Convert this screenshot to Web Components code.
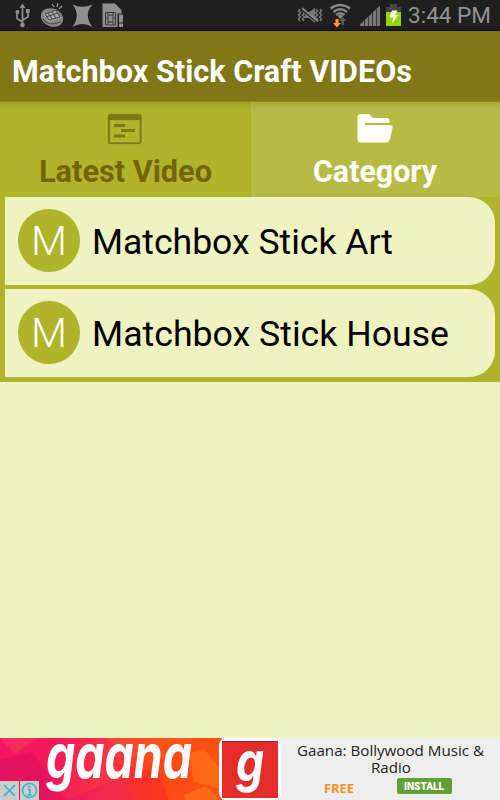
<!DOCTYPE html>
<html lang="en"><head><meta charset="utf-8"><title>Matchbox Stick Craft VIDEOs</title>
<style>html,body{margin:0;width:500px;height:800px;overflow:hidden;background:#eff3c1}body{font-family:Roboto,sans-serif}</style></head>
<body><craft-app></craft-app>
<script>
const define=(name,html,setup)=>customElements.define(name,class extends HTMLElement{
  connectedCallback(){
    if(this.shadowRoot)return;
    const t=document.createElement('template');t.innerHTML=html;
    this.attachShadow({mode:'open'}).append(t.content.cloneNode(true));
    if(setup)setup(this,this.shadowRoot);
  }
});
// Text squeezed or stretched horizontally to the given width.
define('fit-text','<style>:host{display:block;white-space:nowrap}span{display:inline-block;transform-origin:0 50%}</style><span><slot></slot></span>',(h,r)=>{
  const w=+h.getAttribute('width'),s=r.querySelector('span');
  h.style.width=w+'px';
  s.style.transform=`scaleX(${w/s.getBoundingClientRect().width})`;
});
define('status-bar',`<style>
:host{display:flex;height:31px;box-sizing:border-box;background:#1f1f1f;border-bottom:1px solid #090b18;color:#929292}
svg{flex:none}fit-text{font-size:21.500px;line-height:32px;margin-left:3.500px}
</style>
<svg width="404" height="30" fill="#8f8f8f" stroke="none">
 <g fill="none" stroke="#8f8f8f" stroke-width="1.700"><path d="M22.500 6V25M22.500 22L17 18.500V12M22.500 20L28 17V11"/></g>
 <path d="M19.500 8L22.500 3.500 25.500 8zM26 9h3.700v4H26z"/><circle cx="17.500" cy="12" r="2"/><circle cx="22.500" cy="25" r="2.300"/>
 <ellipse cx="52" cy="17.500" rx="11.500" ry="9" transform="rotate(20 52 17.500)" fill="#858585"/>
 <path d="M43 14L56 9 61 18 49 22z" fill="#a5a5a5"/><g fill="none" stroke="#454545" stroke-width="1"><path d="M45 14L56 10 60 17 49 20zM48 13L52 19M52 12L56 18M46 17L58 13M43 19Q48 27 60 22"/></g>
 <path d="M54 7L52 4M57 7L58 3M59 9L62 6" stroke="#999" stroke-width="1.300"/>
 <path d="M72.500 4.500Q82 9 92.500 4.500Q83 15 92.500 27Q82 21 72.500 27Q81 15 72.500 4.500z"/>
 <path d="M102.500 3.500H115L121.500 10V13.500H117.500V27H102.500z"/><path d="M119 14.500h4v8h-4zM119 23.500h4v3.500h-4z"/>
 <path d="M105.500 12.500H115.500V25H105.500zM108 15H113V22H108zM108 12.500V15M113 12.500V15M108 22V25M113 22V25M105.500 18H108M113 18H115.500" fill="none" stroke="#383838" stroke-width="1"/>
 <g fill="none" stroke="#777" stroke-width="1.500"><path d="M300 9l-1.500 2 2 2-2 2 2 2-2 2 1.500 2M304 9l-1.500 2 2 2-2 2 2 2-2 2 1.500 2M316 9l1.500 2-2 2 2 2-2 2 2 2-1.500 2M320 9l1.500 2-2 2 2 2-2 2 2 2-1.500 2"/></g>
 <path d="M305 12h4l6-4v15l-6-5h-4z" fill="#777"/><path d="M302 10L317 22" stroke="#1f1f1f" stroke-width="1.500"/><path d="M302 8L318 21.500" stroke="#858585" stroke-width="1.700"/>
 <g fill="none" stroke="#858585" stroke-width="2.400"><path d="M330.500 8.500Q340 1.500 350 8.500M333.500 12Q340 6.500 347 12M336 15Q340 11.500 344.500 15"/></g><path d="M337.500 15.700Q340 14 343 15.700L340.200 19z"/>
 <path d="M335.500 19h3v4h2.200L337 27.500 333 23h2.500z" fill="#ff9d2e"/><path d="M341.500 25v-4H339l3.800-4 3.700 4H344v4z" fill="#575757"/>
 <path d="M360 26V24.500L380 5.500V26z" fill="#777"/><path d="M364.500 20v6M368.500 16v10M372.500 12v14M376.500 8v18" stroke="#383838" stroke-width="1"/>
 <path d="M390 4h7v3h4v5h-15V7h4z" fill="#464646"/><path d="M386 12h15v14h-15z" fill="#94d400"/><path d="M392 10.500h5.500L395 15h3.500l-6.500 8.500 1.300-6H389.500z" fill="#fff"/>
</svg><fit-text width="83">3:44 PM</fit-text>`);
define('title-bar',`<style>:host{display:flex;height:71px;background:#827717;color:#fff;font-size:30.500px;font-weight:700;line-height:81px;padding-left:12px;border-bottom:1px solid #8d851a;box-sizing:border-box}</style><fit-text width="400"><slot></slot></fit-text>`);
define('nav-tab',`<style>
:host{display:flex;flex-direction:column;align-items:center;flex:1;height:95px;box-sizing:border-box;padding-top:7px;color:#736507;background:linear-gradient(#9da025,#afb42b 8px);font-size:30.500px;font-weight:700;line-height:36px}
:host([active]){background:linear-gradient(#a9aa37,#b8bb43 8px);color:#fff;box-shadow:inset 1px 0 #a9ac31}
::slotted(svg){display:block;flex:none;margin-bottom:9px}
</style><slot name="icon"></slot><slot></slot>`);
define('category-row',`<style>
:host{display:flex;align-items:center;height:87.500px;box-sizing:border-box;padding-left:12.500px;background:#eff3c1;border-radius:0 26px 26px 0;color:#000;font-size:34.500px;line-height:48px}
.badge{width:62.500px;height:62.500px;border-radius:50%;background:#afb42b;color:#fff;display:flex;align-items:center;justify-content:center;font-size:41.500px;font-weight:300;margin:0 12px .500px 0}
::slotted(fit-text){padding-top:2px}
</style><div class="badge"><fit-text width="36">M</fit-text></div><slot></slot>`);
define('category-list',`<style>:host{display:flex;flex-direction:column;gap:4.700px;padding:0 5px 5px;background:#afb42b}</style><slot></slot>`);
define('ad-banner',`<style>
:host{display:flex;height:62px;background:#eee;color:#222;font-family:"Open Sans",sans-serif}
.art{position:relative;width:222px;flex:none;background:linear-gradient(100deg,#f21562 0,#f5195a 25%,#f83443 48%,#ff4812 72%,#fb5414)}
.art>svg{position:absolute;inset:0}.word{position:absolute;left:46px;top:-16px;font:italic 700 62px/68px Inter,sans-serif;font-feature-settings:"cv11";color:#fff}
.choices{position:absolute;left:0;bottom:0;display:flex;gap:1px}
.app{display:flex;align-items:center;justify-content:center;width:62px;height:62px;margin-left:-3px;flex:none;background:#fff;border-radius:7px;z-index:1}
.red{width:56px;height:57px;background:#e42c29;color:#fff;display:flex;justify-content:center;font:italic 700 55px/41px Inter,sans-serif;box-shadow:inset 0 1px #b51b25}
.info{flex:1;display:flex;flex-direction:column;align-items:center;padding:4px 0 0}
.info>fit-text{font-size:15px;line-height:16.500px}
.actions{display:flex;align-self:stretch;padding:3px 0 0 43px;align-items:flex-start}
.free{color:#f5941f;font-size:12px;font-weight:700;line-height:16px;margin:3px 42.500px 0 0}
.install{background:#61a033;border-radius:2px;height:16px;width:55px;box-sizing:border-box;padding-left:7.500px;color:#fff;font:900 10.500px/17px Roboto,sans-serif}
</style>
<div class="art"><svg width="222" height="62"><g opacity=".25"><path fill="#b80866" d="M0 22l32-8 35 48H0z"/><path fill="#ff665b" d="M0 0h38L15 16z"/><path fill="#ff7b1b" d="M105 0h90l-40 25-30-10z"/><path fill="#e30078" d="M65 62l45-18 28-8 24 26z"/><path fill="#f50748" d="M115 25l45 10 9 27h-33z"/><path fill="#ffb11a" d="M188 15l16-4 18 22v18l-28-7zM183 57l23-9 14 14h-34z"/></g></svg>
<fit-text class="word" width="146">gaana</fit-text>
<div class="choices"><svg width="19" height="19"><path fill="#ccc" d="M0 0h19v19H0z"/><path d="M4 4l11 11M15 4L4 15" stroke="#35b5cb" stroke-width="1.700"/></svg><svg width="19" height="19"><path fill="#ccc" d="M0 0h19v19H0z"/><circle cx="9.500" cy="9.500" r="7" fill="none" stroke="#35b5cb" stroke-width="1.500"/><path d="M9.500 4.500v2M8 8.500h1.800v5M7.500 14h4" stroke="#35b5cb" stroke-width="1.700" fill="none"/></svg></div></div>
<div class="app"><div class="red"><fit-text width="28">g</fit-text></div></div>
<div class="info"><fit-text width="187">Gaana: Bollywood Music &amp;</fit-text><fit-text width="40">Radio</fit-text><div class="actions"><fit-text class="free" width="30">FREE</fit-text><div class="install"><fit-text width="40">INSTALL</fit-text></div></div></div>`);
define('craft-app',`<style>:host{display:flex;flex-direction:column;width:500px;height:800px;background:#eff3c1}nav{display:flex}ad-banner{margin-top:auto}</style>
<status-bar></status-bar><title-bar>Matchbox Stick Craft VIDEOs</title-bar>
<nav><nav-tab><svg slot="icon" width="36" height="36"><path fill="#827717" fill-rule="evenodd" stroke="#bcbd55" stroke-width=".5" d="M3 4.500H32Q35 4.500 35 7.500V32Q35 35.500 32 35.500H3Q.5 35.500.5 32V7.500Q.5 4.500 3 4.500zM3.200 11.500V33H32.300V11.500z"/><path d="M7 16.500H18M14 21.500H28M7 27H18" stroke="#827717" stroke-width="3"/></svg><fit-text width="173">Latest Video</fit-text></nav-tab>
<nav-tab active><svg slot="icon" width="36" height="36"><path fill="#fff" d="M3.500 5H12L16 9H29Q32.500 9 32.500 12V14H8V16H33Q36 16 35.500 19L33 30Q32 33.500 29 33.500H4Q.5 33.500.5 30V8Q.5 5 3.500 5z"/></svg><fit-text width="124">Category</fit-text></nav-tab></nav>
<category-list><category-row><fit-text width="301">Matchbox Stick Art</fit-text></category-row><category-row><fit-text width="357">Matchbox Stick House</fit-text></category-row></category-list>
<ad-banner></ad-banner>`);
</script></body></html>
